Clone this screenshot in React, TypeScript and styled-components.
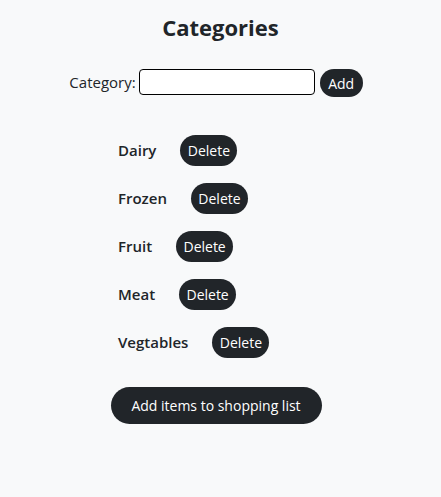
import React from "react";
import styled, { createGlobalStyle } from "styled-components";

const Global = createGlobalStyle`
  html, body { margin: 0; padding: 0; background: #f8f9fa; }
  body { font-family: "Open Sans", "Noto Sans", sans-serif; color: #212529; }
`;

const Page = styled.div`
  width: 441px;
  min-height: 497px;
  display: flex;
  flex-direction: column;
  align-items: center;
  box-sizing: border-box;
`;

const Title = styled.h2`
  margin: 14px 0 0;
  font-size: 22px;
  font-weight: 700;
  line-height: 1.2;
`;

const Form = styled.form`
  margin-top: 26px;
  display: flex;
  align-items: center;
  margin-right: 9px;
`;

const Label = styled.label`
  font-size: 15px;
  margin-right: 3px;
`;

const Input = styled.input`
  width: 176px;
  height: 26px;
  box-sizing: border-box;
  border: 1px solid #000;
  border-radius: 4px;
  background: #fff;
`;

const PillButton = styled.button<{ $w: number; $h: number; $fs: number }>`
  width: ${(p) => p.$w}px;
  height: ${(p) => p.$h}px;
  border: none;
  border-radius: 999px;
  background: #212529;
  color: #fff;
  font-family: inherit;
  font-size: ${(p) => p.$fs}px;
  padding: 0;
  cursor: pointer;
`;

const AddBtn = styled(PillButton)`
  margin-left: 5px;
  margin-top: 3px;
`;

const List = styled.ul`
  list-style: none;
  margin: 38px 0 0;
  padding: 0 0 0 118px;
  align-self: stretch;
  display: flex;
  flex-direction: column;
  gap: 17px;
`;

const Row = styled.li`
  display: flex;
  align-items: center;
  gap: 24px;
`;

const Name = styled.span`
  font-size: 15px;
  font-weight: 600;
  margin-top: -2px;
`;

const Footer = styled.div`
  margin-top: 29px;
  margin-right: 9px;
`;

const items = ["Dairy", "Frozen", "Fruit", "Meat", "Vegtables"];

export default function App() {
  return (
    <Page>
      <Global />
      <Title>Categories</Title>
      <Form onSubmit={(e) => e.preventDefault()}>
        <Label>Category:</Label>
        <Input type="text" />
        <AddBtn $w={43} $h={28} $fs={14}>Add</AddBtn>
      </Form>
      <List>
        {items.map((it) => (
          <Row key={it}>
            <Name>{it}</Name>
            <PillButton $w={57} $h={31} $fs={14}>Delete</PillButton>
          </Row>
        ))}
      </List>
      <Footer>
        <PillButton $w={211} $h={37} $fs={14}>Add items to shopping list</PillButton>
      </Footer>
    </Page>
  );
}
